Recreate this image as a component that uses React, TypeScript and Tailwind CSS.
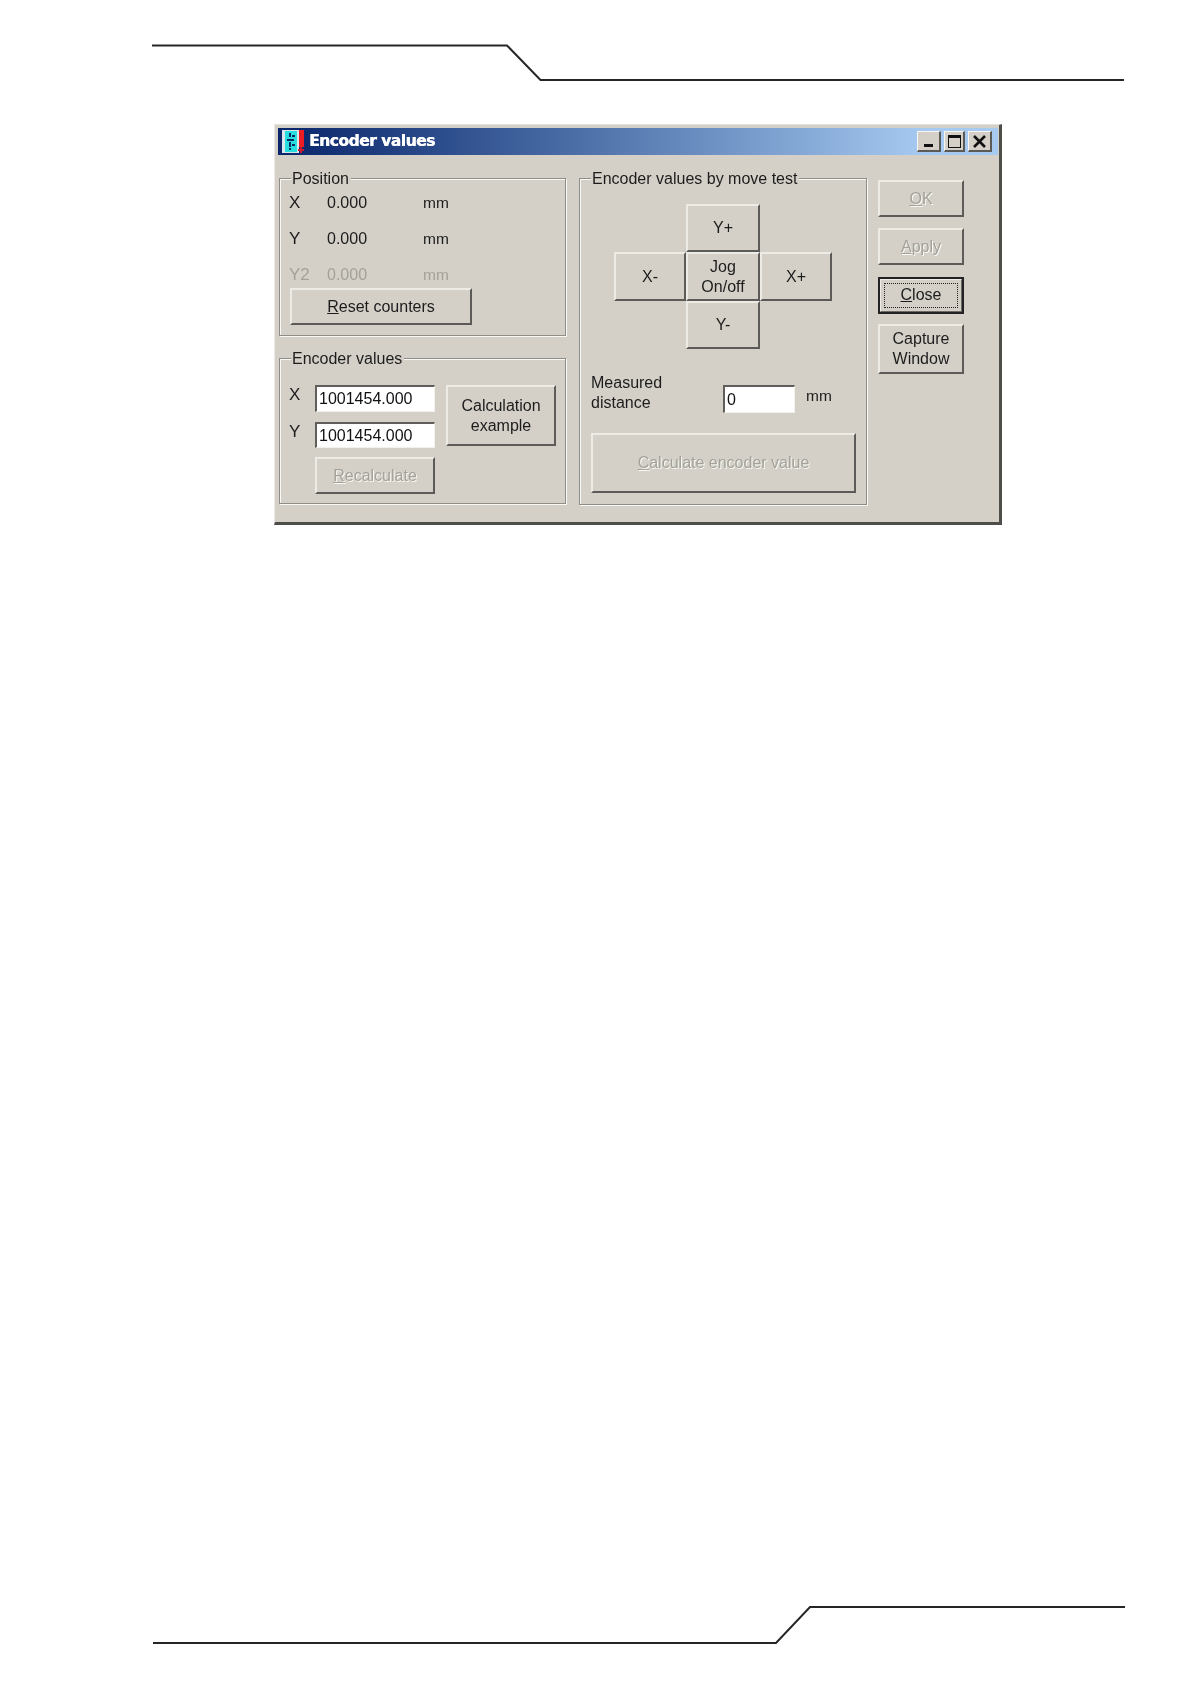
import React from "react";

function Btn({ className = "", children }: { className?: string; children: React.ReactNode }) {
  return (
    <button
      className={
        "flex items-center justify-center text-center leading-[20px] bg-[#d4d0c8] border-t-2 border-l-2 border-r-2 border-b-2 border-t-[#ecebe6] border-l-[#ecebe6] border-r-[#5c5b57] border-b-[#5c5b57] " +
        className
      }
    >
      {children}
    </button>
  );
}

function Disabled({ children }: { children: React.ReactNode }) {
  return <span className="text-[#a3a199] [text-shadow:1px_1px_0_#f8f8f4]">{children}</span>;
}

function Field({ value, className = "" }: { value: string; className?: string }) {
  return (
    <input
      readOnly
      value={value}
      className={
        "bg-white text-[#111] pl-[2px] text-[16px] outline-none border-t-2 border-l-2 border-r border-b border-t-[#5f5e5a] border-l-[#5f5e5a] border-r-[#f2f1ec] border-b-[#f2f1ec] " +
        className
      }
    />
  );
}

function Group({ title, className = "", children }: { title: string; className?: string; children: React.ReactNode }) {
  return (
    <div className={"relative border border-[#8f8d87] shadow-[1px_1px_0_#f8f8f4,inset_1px_1px_0_#f8f8f4] " + className}>
      <span className="absolute left-[11px] top-[-10px] bg-[#d4d0c8] pl-[1px] pr-[2px] leading-[20px] whitespace-nowrap">
        {title}
      </span>
      {children}
    </div>
  );
}

function CapButton({ className = "w-[24px]", children }: { className?: string; children: React.ReactNode }) {
  return (
    <div className={"h-[21px] flex items-center justify-center bg-[#d4d0c8] border-t border-l border-t-[#f7f6f2] border-l-[#f7f6f2] border-r-2 border-b-2 border-r-[#5a5a57] border-b-[#5a5a57] " + className}>
      {children}
    </div>
  );
}

export default function App() {
  return (
    <div className="relative w-[1191px] h-[1684px] bg-white flex flex-col font-['Liberation_Sans',Arial,sans-serif] text-[16px] text-[#1c1c1c]">
      <svg className="block shrink-0" width="1191" height="124" viewBox="0 0 1191 124">
        <polyline points="152,45.5 507,45.5 540.5,80 1124,80" fill="none" stroke="#262626" strokeWidth="2" />
      </svg>

      {/* Window */}
      <div className="ml-[274px] w-[728px] h-[401px] shrink-0 bg-[#d4d0c8] blur-[0.5px] border-t-[1px] border-l-[1px] border-t-[#e4e2dc] border-l-[#ecebe6] border-r-[3px] border-b-[3px] border-r-[#4d4d4a] border-b-[#4d4d4a] pt-[3px] pl-[3px] pr-[1px]">
        {/* Title bar */}
        <div className="h-[27px] flex items-center pl-[4px] pr-[6px] bg-gradient-to-r from-[#0a246a] to-[#a6caf0] to-90%">
          <svg width="22" height="23" viewBox="0 0 22 23" className="shrink-0">
            <rect x="0" y="0" width="17" height="23" fill="#dbe6ea" />
            <rect x="3" y="1" width="12" height="21" fill="#27dede" />
            <rect x="17" y="0" width="5" height="17" fill="#ee1c25" />
            <path d="M7 3h2v4H7zM10 5h3v2h-3zM5 9h7v2H5zM7 12h2v5H7zM10 14h3v2h-3zM7 18h2v2H7z" fill="#0a2a66" />
            <path d="M18 17h2v2h2v2h-2v2h-2v-2h-2v-2h2z" fill="#cc1a2a" />
          </svg>
          <span className="ml-[5px] flex-1 font-['DejaVu_Sans',sans-serif] font-bold text-[15.5px] tracking-[-0.5px] text-white whitespace-nowrap [text-shadow:0.4px_0_0_#fff]">
            Encoder values
          </span>
          <CapButton>
            <svg width="14" height="12" viewBox="0 0 14 12"><rect x="2" y="9" width="9" height="3" fill="#111" /></svg>
          </CapButton>
          <div className="ml-[3px]">
            <CapButton className="w-[21px]">
              <svg width="15" height="14" viewBox="0 0 15 14"><path d="M1 1h13v13H1z M2 4v9h11V4z" fill="#111" fillRule="evenodd" /></svg>
            </CapButton>
          </div>
          <div className="ml-[3px]">
            <CapButton>
              <svg width="15" height="13" viewBox="0 0 15 13"><path d="M2 1l11 11M13 1L2 12" stroke="#111" strokeWidth="2.6" fill="none" /></svg>
            </CapButton>
          </div>
        </div>

        {/* Body */}
        <div className="flex mt-[23px]">
          {/* Left column */}
          <div className="w-[287px] ml-[1px] flex flex-col">
            <Group title="Position" className="h-[158px]">
              <div className="pt-[13px] pl-[9px]">
                <div className="flex items-center h-[22px]">
                  <span className="w-[38px] text-[17px]">X</span>
                  <span className="w-[96px]">0.000</span>
                  <span className="text-[15.5px]">mm</span>
                </div>
                <div className="flex items-center h-[22px] mt-[14px]">
                  <span className="w-[38px] text-[17px]">Y</span>
                  <span className="w-[96px]">0.000</span>
                  <span className="text-[15.5px]">mm</span>
                </div>
                <div className="flex items-center h-[22px] mt-[14px] text-[#a3a199]">
                  <span className="w-[38px] text-[17px]">Y2</span>
                  <span className="w-[96px]">0.000</span>
                  <span className="text-[15.5px]">mm</span>
                </div>
                <Btn className="w-[182px] h-[37px] ml-[1px] mt-[2px]">
                  <span><u>R</u>eset counters</span>
                </Btn>
              </div>
            </Group>
            <Group title="Encoder values" className="h-[146px] mt-[22px]">
              <div className="flex pt-[26px] pl-[9px]">
                <div className="flex flex-col">
                  <div className="flex">
                    <span className="w-[26px] text-[17px] leading-[20px]">X</span>
                    <Field value="1001454.000" className="w-[120px] h-[27px]" />
                  </div>
                  <div className="flex mt-[10px]">
                    <span className="w-[26px] text-[17px] leading-[20px]">Y</span>
                    <Field value="1001454.000" className="w-[120px] h-[26px]" />
                  </div>
                  <Btn className="w-[120px] h-[37px] ml-[26px] mt-[9px]">
                    <Disabled><u>R</u>ecalculate</Disabled>
                  </Btn>
                </div>
                <Btn className="w-[110px] h-[61px] ml-[11px]">
                  <span>Calculation<br />example</span>
                </Btn>
              </div>
            </Group>
          </div>

          {/* Middle column */}
          <Group title="Encoder values by move test" className="w-[288px] h-[327px] ml-[13px]">
            <div className="pl-[34px] pt-[25px]">
              <div className="grid grid-cols-[72px_74px_72px] grid-rows-[48px_49px_48px]">
                <Btn className="col-start-2 row-start-1">Y+</Btn>
                <Btn className="col-start-1 row-start-2">X-</Btn>
                <Btn className="col-start-2 row-start-2">
                  <span>Jog<br />On/off</span>
                </Btn>
                <Btn className="col-start-3 row-start-2">X+</Btn>
                <Btn className="col-start-2 row-start-3">Y-</Btn>
              </div>
            </div>
            <div className="flex items-start pl-[11px] mt-[24px]">
              <span className="w-[132px] leading-[20px]">Measured<br />distance</span>
              <Field value="0" className="w-[72px] h-[28px] mt-[12px]" />
              <span className="ml-[11px] mt-[13px] leading-[20px] text-[15.5px]">mm</span>
            </div>
            <Btn className="w-[265px] h-[60px] ml-[11px] mt-[20px]">
              <Disabled><u>C</u>alculate encoder value</Disabled>
            </Btn>
          </Group>

          {/* Right column */}
          <div className="w-[86px] ml-[11px] mt-[2px] flex flex-col">
            <Btn className="h-[37px]"><Disabled><u>O</u>K</Disabled></Btn>
            <Btn className="h-[37px] mt-[11px]"><Disabled><u>A</u>pply</Disabled></Btn>
            <div className="h-[37px] mt-[12px] border-2 border-[#222] flex">
              <div className="flex-1 flex items-center justify-center bg-[#d4d0c8] border border-[#6b6a66] border-t-[#ecebe6] border-l-[#ecebe6] p-[3px]">
                <div className="w-full h-full flex items-center justify-center border border-dotted border-[#222]">
                  <span className="mb-[2px]"><u>C</u>lose</span>
                </div>
              </div>
            </div>
            <Btn className="h-[50px] mt-[10px]">
              <span>Capture<br />Window</span>
            </Btn>
          </div>
        </div>
      </div>

      <svg className="block shrink-0 mt-auto" width="1191" height="110" viewBox="0 0 1191 110">
        <polyline points="153,69 776,69 810,33 1125,33" fill="none" stroke="#262626" strokeWidth="2" />
      </svg>
    </div>
  );
}
